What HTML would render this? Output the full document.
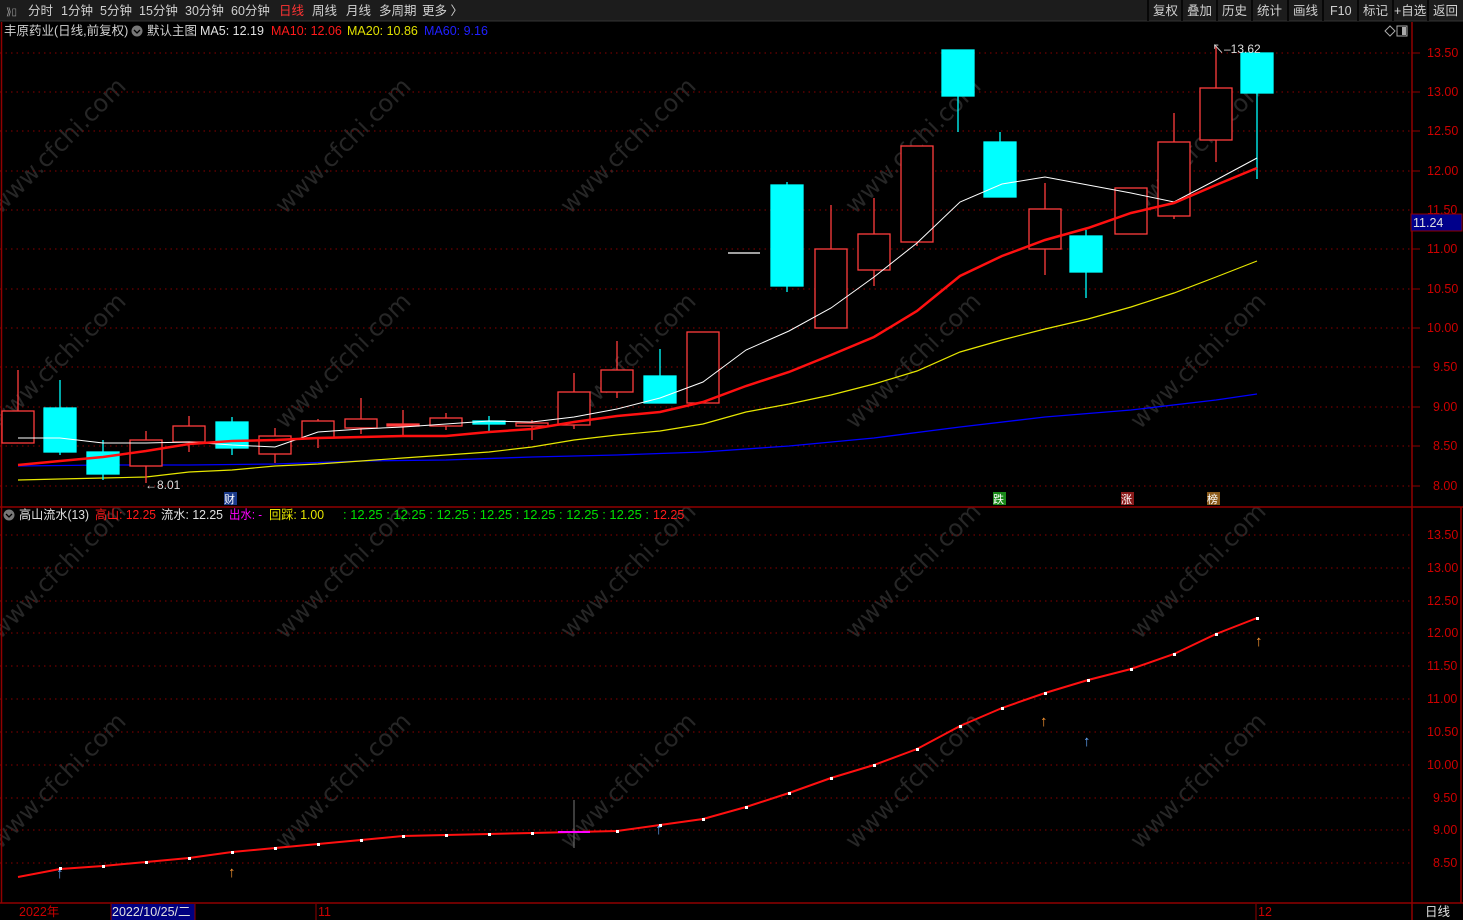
<!DOCTYPE html>
<html><head><meta charset="utf-8"><style>
body{margin:0;background:#000;width:1463px;height:920px;overflow:hidden;font-family:"Liberation Sans","Noto Sans CJK SC",sans-serif}
svg{display:block}
</style></head><body>
<svg width="1463" height="920" xmlns="http://www.w3.org/2000/svg" font-family="Liberation Sans, Noto Sans CJK SC, sans-serif">
<rect width="1463" height="920" fill="#000"/>
<!-- toolbar -->
<rect x="0" y="0" width="1463" height="21" fill="#1c1c1c"/>
<line x1="0" y1="21" x2="1463" y2="21" stroke="#333"/>
<g font-size="12.5" fill="#d0d0d0">
<text x="6" y="15" fill="#999" font-size="10">⟫▯</text>
<text x="28" y="15">分时</text><text x="61" y="15">1分钟</text><text x="100" y="15">5分钟</text><text x="139" y="15">15分钟</text><text x="185" y="15">30分钟</text><text x="231" y="15">60分钟</text>
<text x="279" y="15" fill="#ff3333">日线</text><text x="312" y="15">周线</text><text x="346" y="15">月线</text><text x="379" y="15">多周期</text><text x="422" y="15">更多 〉</text>
<text x="1153" y="15">复权</text><text x="1187" y="15">叠加</text><text x="1222" y="15">历史</text><text x="1257" y="15">统计</text><text x="1293" y="15">画线</text><text x="1330" y="15">F10</text><text x="1363" y="15">标记</text><text x="1394" y="15">+自选</text><text x="1433" y="15">返回</text>
</g>
<g stroke="#000" stroke-width="1.5"><line x1="1148" y1="0" x2="1148" y2="21"/><line x1="1182" y1="0" x2="1182" y2="21"/><line x1="1217" y1="0" x2="1217" y2="21"/><line x1="1252" y1="0" x2="1252" y2="21"/><line x1="1288" y1="0" x2="1288" y2="21"/><line x1="1323" y1="0" x2="1323" y2="21"/><line x1="1358" y1="0" x2="1358" y2="21"/><line x1="1393" y1="0" x2="1393" y2="21"/><line x1="1428" y1="0" x2="1428" y2="21"/></g>
<!-- watermarks -->
<g font-size="24" fill="#262626" font-family="DejaVu Sans, sans-serif">
<text transform="translate(0,215) rotate(-45)">www.cfchi.com</text>
<text transform="translate(285,215) rotate(-45)">www.cfchi.com</text>
<text transform="translate(570,215) rotate(-45)">www.cfchi.com</text>
<text transform="translate(855,215) rotate(-45)">www.cfchi.com</text>
<text transform="translate(1140,215) rotate(-45)">www.cfchi.com</text>
<text transform="translate(0,430) rotate(-45)">www.cfchi.com</text>
<text transform="translate(285,430) rotate(-45)">www.cfchi.com</text>
<text transform="translate(570,430) rotate(-45)">www.cfchi.com</text>
<text transform="translate(855,430) rotate(-45)">www.cfchi.com</text>
<text transform="translate(1140,430) rotate(-45)">www.cfchi.com</text>
<text transform="translate(0,640) rotate(-45)">www.cfchi.com</text>
<text transform="translate(285,640) rotate(-45)">www.cfchi.com</text>
<text transform="translate(570,640) rotate(-45)">www.cfchi.com</text>
<text transform="translate(855,640) rotate(-45)">www.cfchi.com</text>
<text transform="translate(1140,640) rotate(-45)">www.cfchi.com</text>
<text transform="translate(0,850) rotate(-45)">www.cfchi.com</text>
<text transform="translate(285,850) rotate(-45)">www.cfchi.com</text>
<text transform="translate(570,850) rotate(-45)">www.cfchi.com</text>
<text transform="translate(855,850) rotate(-45)">www.cfchi.com</text>
<text transform="translate(1140,850) rotate(-45)">www.cfchi.com</text>
</g>
<!-- header main -->
<g font-size="12.5">
<text x="4" y="35" fill="#d0d0d0">丰原药业(日线,前复权)</text>
<circle cx="137" cy="31" r="5.5" fill="#777"/><path d="M134 30 l3 3 l3 -3" stroke="#000" fill="none" stroke-width="1.3"/>
<text x="147" y="35" fill="#d0d0d0">默认主图</text>
<text x="200" y="35" fill="#e0e0e0">MA5: 12.19</text>
<text x="271" y="35" fill="#ff1a1a">MA10: 12.06</text>
<text x="347" y="35" fill="#e0e000">MA20: 10.86</text>
<text x="424" y="35" fill="#2020ff">MA60: 9.16</text>
</g>
<path d="M1385 31 l5 -5 l5 5 l-5 5z" fill="none" stroke="#aaa"/>
<rect x="1397" y="26" width="10" height="10" fill="none" stroke="#aaa"/><rect x="1402" y="27" width="4" height="8" fill="#aaa"/>
<!-- grid main -->
<g stroke="#8a0000" stroke-dasharray="1.5 4">
<line x1="0" y1="53" x2="1410" y2="53"/><line x1="0" y1="92" x2="1410" y2="92"/><line x1="0" y1="131" x2="1410" y2="131"/><line x1="0" y1="171" x2="1410" y2="171"/><line x1="0" y1="210" x2="1410" y2="210"/><line x1="0" y1="249" x2="1410" y2="249"/><line x1="0" y1="289" x2="1410" y2="289"/><line x1="0" y1="328" x2="1410" y2="328"/><line x1="0" y1="367" x2="1410" y2="367"/><line x1="0" y1="407" x2="1410" y2="407"/><line x1="0" y1="446" x2="1410" y2="446"/><line x1="0" y1="486" x2="1410" y2="486"/>
</g>
<g stroke="#8a0000" stroke-dasharray="1.5 4">
<line x1="0" y1="535" x2="1410" y2="535"/><line x1="0" y1="568" x2="1410" y2="568"/><line x1="0" y1="601" x2="1410" y2="601"/><line x1="0" y1="633" x2="1410" y2="633"/><line x1="0" y1="666" x2="1410" y2="666"/><line x1="0" y1="699" x2="1410" y2="699"/><line x1="0" y1="732" x2="1410" y2="732"/><line x1="0" y1="765" x2="1410" y2="765"/><line x1="0" y1="798" x2="1410" y2="798"/><line x1="0" y1="830" x2="1410" y2="830"/><line x1="0" y1="863" x2="1410" y2="863"/>
</g>
<!-- frame lines -->
<g stroke="#900000" stroke-width="1.5">
<line x1="1412" y1="22" x2="1412" y2="920"/>
<line x1="0" y1="507" x2="1463" y2="507"/>
<line x1="0" y1="903" x2="1463" y2="903"/>
<line x1="1461" y1="507" x2="1461" y2="903"/>
<line x1="1.5" y1="22" x2="1.5" y2="903"/>
</g>
<!-- axis labels -->
<g font-size="12.5" fill="#cc0000">
<text x="1427" y="57">13.50</text><text x="1427" y="96">13.00</text><text x="1427" y="135">12.50</text><text x="1427" y="175">12.00</text><text x="1427" y="214">11.50</text><text x="1427" y="253">11.00</text><text x="1427" y="293">10.50</text><text x="1427" y="332">10.00</text><text x="1433" y="371">9.50</text><text x="1433" y="411">9.00</text><text x="1433" y="450">8.50</text><text x="1433" y="490">8.00</text>
<text x="1427" y="539">13.50</text><text x="1427" y="572">13.00</text><text x="1427" y="605">12.50</text><text x="1427" y="637">12.00</text><text x="1427" y="670">11.50</text><text x="1427" y="703">11.00</text><text x="1427" y="736">10.50</text><text x="1427" y="769">10.00</text><text x="1433" y="802">9.50</text><text x="1433" y="834">9.00</text><text x="1433" y="867">8.50</text>
</g>
<g stroke="#900000"><line x1="1412" y1="53" x2="1420" y2="53"/><line x1="1412" y1="92" x2="1420" y2="92"/><line x1="1412" y1="131" x2="1420" y2="131"/><line x1="1412" y1="171" x2="1420" y2="171"/><line x1="1412" y1="249" x2="1420" y2="249"/><line x1="1412" y1="289" x2="1420" y2="289"/><line x1="1412" y1="328" x2="1420" y2="328"/><line x1="1412" y1="367" x2="1420" y2="367"/><line x1="1412" y1="407" x2="1420" y2="407"/><line x1="1412" y1="446" x2="1420" y2="446"/><line x1="1412" y1="486" x2="1420" y2="486"/></g>
<rect x="1411" y="214" width="51" height="17" fill="#00008b" stroke="#900000"/>
<text x="1413" y="227" font-size="12.5" fill="#e0e0e0">11.24</text>
<!-- MA lines -->
<polyline fill="none" stroke="#0000ff" stroke-width="1.3" points="18,466 103,465 189,465 275,464 361,461 446,460 532,457 617,455 703,452 789,446 874,438 960,427 1045,417 1131,410 1216,400 1257,394"/>
<polyline fill="none" stroke="#e6e600" stroke-width="1.2" points="18,480 60,479 103,478 146,477 189,472 232,470 275,466 318,464 361,461 403,458 446,455 489,452 532,447 574,440 617,435 660,431 703,424 746,412 789,404 831,395 874,384 917,371 960,352 1002,340 1045,329 1088,319 1131,307 1174,293 1216,277 1257,261"/>
<!-- candles -->
<g stroke-width="1.3">
<g stroke="#ff3c3c" fill="#000">
<line x1="18" y1="370" x2="18" y2="443"/><rect x="2" y="411" width="32" height="32"/>
<line x1="146" y1="431" x2="146" y2="483"/><rect x="130" y="440" width="32" height="26"/>
<line x1="189" y1="416" x2="189" y2="452"/><rect x="173" y="426" width="32" height="16"/>
<line x1="275" y1="428" x2="275" y2="463"/><rect x="259" y="436" width="32" height="18"/>
<line x1="318" y1="419" x2="318" y2="448"/><rect x="302" y="421" width="32" height="17"/>
<line x1="361" y1="398" x2="361" y2="434"/><rect x="345" y="419" width="32" height="9"/>
<line x1="403" y1="410" x2="403" y2="435"/><rect x="387" y="424" width="32" height="2" fill="#ff3c3c"/>
<line x1="446" y1="413" x2="446" y2="430"/><rect x="430" y="418" width="32" height="8"/>
<line x1="532" y1="420" x2="532" y2="440"/><rect x="516" y="423" width="32" height="3"/>
<line x1="574" y1="373" x2="574" y2="429"/><rect x="558" y="392" width="32" height="33"/>
<line x1="617" y1="341" x2="617" y2="398"/><rect x="601" y="370" width="32" height="22"/>
<line x1="703" y1="332" x2="703" y2="403"/><rect x="687" y="332" width="32" height="71"/>
<line x1="831" y1="205" x2="831" y2="328"/><rect x="815" y="249" width="32" height="79"/>
<line x1="874" y1="198" x2="874" y2="286"/><rect x="858" y="234" width="32" height="36"/>
<line x1="917" y1="146" x2="917" y2="246"/><rect x="901" y="146" width="32" height="96"/>
<line x1="1045" y1="183" x2="1045" y2="275"/><rect x="1029" y="209" width="32" height="40"/>
<line x1="1131" y1="188" x2="1131" y2="234"/><rect x="1115" y="188" width="32" height="46"/>
<line x1="1174" y1="113" x2="1174" y2="219"/><rect x="1158" y="142" width="32" height="74"/>
<line x1="1216" y1="46" x2="1216" y2="162"/><rect x="1200" y="88" width="32" height="52"/>
</g>
<g stroke="#00ffff" fill="#00ffff">
<line x1="60" y1="380" x2="60" y2="455"/><rect x="44" y="408" width="32" height="44"/>
<line x1="103" y1="440" x2="103" y2="480"/><rect x="87" y="452" width="32" height="22"/>
<line x1="232" y1="417" x2="232" y2="455"/><rect x="216" y="422" width="32" height="26"/>
<line x1="489" y1="416" x2="489" y2="432"/><rect x="473" y="421" width="32" height="3"/>
<line x1="660" y1="349" x2="660" y2="403"/><rect x="644" y="376" width="32" height="27"/>
<line x1="787" y1="182" x2="787" y2="292"/><rect x="771" y="185" width="32" height="101"/>
<line x1="958" y1="50" x2="958" y2="132"/><rect x="942" y="50" width="32" height="46"/>
<line x1="1000" y1="132" x2="1000" y2="197"/><rect x="984" y="142" width="32" height="55"/>
<line x1="1086" y1="230" x2="1086" y2="298"/><rect x="1070" y="236" width="32" height="36"/>
<line x1="1257" y1="53" x2="1257" y2="179"/><rect x="1241" y="53" width="32" height="40"/>
</g>
<line x1="728" y1="253" x2="760" y2="253" stroke="#fff"/>
</g>
<polyline fill="none" stroke="#ffffff" stroke-width="1" points="18,438 60,438 103,443 146,443 189,442 232,445 275,447 318,432 361,429 403,427 446,424 489,421 532,422 574,417 617,409 660,398 703,382 746,350 789,331 831,308 874,277 917,243 960,202 1002,184 1045,177 1088,185 1131,193 1174,202 1216,180 1257,158"/>
<polyline fill="none" stroke="#ff1010" stroke-width="2.5" points="18,465 60,461 103,457 146,451 189,444 232,441 275,440 318,438 361,437 403,436 446,436 489,432 532,429 574,422 617,416 660,412 703,402 746,386 789,372 831,355 874,337 917,311 960,276 1002,256 1045,240 1088,228 1131,213 1174,203 1216,185 1257,168"/>
<text x="145" y="489" font-size="12" fill="#ddd">←8.01</text>
<text x="1212" y="53" font-size="12" fill="#ddd">↖–13.62</text>
<g font-size="11">
<rect x="224" y="492" width="13" height="13" fill="#1a3a8a"/><text x="224" y="503" fill="#fff">财</text>
<rect x="993" y="492" width="13" height="13" fill="#1a8a1a"/><text x="993" y="503" fill="#fff">跌</text>
<rect x="1121" y="492" width="13" height="13" fill="#8a1a1a"/><text x="1121" y="503" fill="#fff">涨</text>
<rect x="1207" y="492" width="13" height="13" fill="#8a5a1a"/><text x="1207" y="503" fill="#fff">榜</text>
</g>
<!-- lower header -->
<g font-size="12.5">
<circle cx="9" cy="515" r="5.5" fill="#777"/><path d="M6 514 l3 3 l3 -3" stroke="#000" fill="none" stroke-width="1.3"/>
<text x="19" y="519" fill="#e0e0e0" textLength="70" lengthAdjust="spacingAndGlyphs">高山流水(13)</text>
<text x="95" y="519" fill="#ff1a1a" textLength="61" lengthAdjust="spacingAndGlyphs">高山: 12.25</text>
<text x="161" y="519" fill="#e0e0e0" textLength="62" lengthAdjust="spacingAndGlyphs">流水: 12.25</text>
<text x="229" y="519" fill="#ff00ff" textLength="33" lengthAdjust="spacingAndGlyphs">出水: -</text>
<text x="269" y="519" fill="#e6e600" textLength="55" lengthAdjust="spacingAndGlyphs">回踩: 1.00</text>
<text x="343" y="519" fill="#00e000" textLength="306" lengthAdjust="spacingAndGlyphs">: 12.25 : 12.25 : 12.25 : 12.25 : 12.25 : 12.25 : 12.25 :</text>
<text x="653" y="519" fill="#ff1a1a">12.25</text>
</g>
<!-- lower line -->
<line x1="574" y1="800" x2="574" y2="848" stroke="#777"/>
<polyline fill="none" stroke="#ff1010" stroke-width="2" points="18,877 60,869 103,866 146,862 189,858 232,852 275,848 318,844 361,840 403,836 446,835 489,834 532,833 574,832 617,831 660,825 703,819 746,807 789,793 831,778 874,765 917,749 960,726 1002,708 1045,693 1088,680 1131,669 1174,654 1216,634 1257,618"/>
<line x1="558" y1="832" x2="590" y2="832" stroke="#ff00ff" stroke-width="2"/>
<g fill="#fff"><rect x="59" y="867" width="3" height="3"/><rect x="102" y="865" width="3" height="3"/><rect x="145" y="861" width="3" height="3"/><rect x="188" y="857" width="3" height="3"/><rect x="231" y="851" width="3" height="3"/><rect x="274" y="847" width="3" height="3"/><rect x="317" y="843" width="3" height="3"/><rect x="360" y="839" width="3" height="3"/><rect x="402" y="835" width="3" height="3"/><rect x="445" y="834" width="3" height="3"/><rect x="488" y="833" width="3" height="3"/><rect x="531" y="832" width="3" height="3"/><rect x="616" y="830" width="3" height="3"/><rect x="659" y="824" width="3" height="3"/><rect x="702" y="818" width="3" height="3"/><rect x="745" y="806" width="3" height="3"/><rect x="788" y="792" width="3" height="3"/><rect x="830" y="777" width="3" height="3"/><rect x="873" y="764" width="3" height="3"/><rect x="916" y="748" width="3" height="3"/><rect x="959" y="725" width="3" height="3"/><rect x="1001" y="707" width="3" height="3"/><rect x="1044" y="692" width="3" height="3"/><rect x="1087" y="679" width="3" height="3"/><rect x="1130" y="668" width="3" height="3"/><rect x="1173" y="653" width="3" height="3"/><rect x="1215" y="633" width="3" height="3"/><rect x="1256" y="617" width="3" height="3"/></g>
<g font-size="15" font-weight="bold">
<text x="56" y="878" fill="#66aaff">↑</text><text x="228" y="877" fill="#ff9933">↑</text><text x="655" y="834" fill="#66aaff">↑</text><text x="1040" y="726" fill="#ff9933">↑</text><text x="1083" y="746" fill="#66aaff">↑</text><text x="1255" y="646" fill="#ff9933">↑</text>
</g>
<!-- bottom axis -->
<text x="19" y="916" font-size="12.5" fill="#cc0000">2022年</text>
<rect x="111" y="904" width="84" height="16" fill="#000080"/>
<line x1="111" y1="904" x2="111" y2="920" stroke="#900000"/><line x1="195" y1="904" x2="195" y2="920" stroke="#900000"/>
<text x="112" y="916" font-size="12.5" fill="#e0e0e0">2022/10/25/二</text>
<line x1="316" y1="904" x2="316" y2="920" stroke="#900000"/><text x="318" y="916" font-size="12.5" fill="#cc0000">11</text>
<line x1="1256" y1="904" x2="1256" y2="920" stroke="#900000"/><text x="1258" y="916" font-size="12.5" fill="#cc0000">12</text>
<text x="1425" y="916" font-size="12.5" fill="#e0e0e0">日线</text>
</svg>
</body></html>
